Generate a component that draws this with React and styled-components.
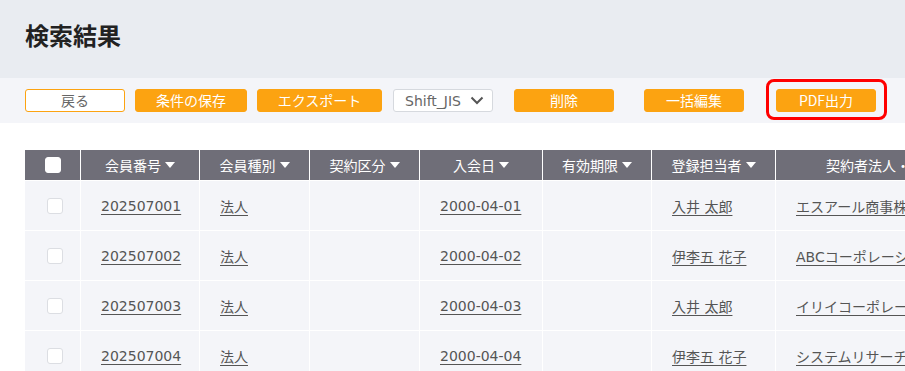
import React from "react";
import styled, { createGlobalStyle } from "styled-components";

const GlobalStyle = createGlobalStyle`
  html, body {
    margin: 0;
    padding: 0;
    background: #fff;
    overflow: hidden;
  }
  body {
    font-family: "DejaVu Sans", "Noto Sans CJK JP", sans-serif;
    color: #555;
  }
`;

const Page = styled.div`
  width: 905px;
  height: 371px;
  overflow: hidden;
`;

const Header = styled.header`
  height: 78px;
  box-sizing: border-box;
  background: #e9ecf1;
  padding: 20px 25px 0;
`;

const Title = styled.h1`
  margin: 0;
  font-family: "Noto Sans CJK JP", sans-serif;
  font-size: 24px;
  line-height: 30px;
  font-weight: 700;
  color: #222;
`;

const Toolbar = styled.div`
  height: 45px;
  background: #f4f5f9;
  padding: 0 25px;
  display: flex;
  align-items: center;
`;

const Button = styled.button`
  box-sizing: border-box;
  width: ${(p) => p.$w || 100}px;
  height: 23px;
  margin-left: ${(p) => p.$ml || 0}px;
  border-radius: 3px;
  border: 1px solid #fca311;
  background: ${(p) => (p.$outline ? "#fff" : "#fca311")};
  color: ${(p) => (p.$outline ? "#666" : "#fff")};
  font-family: "Noto Sans CJK JP", sans-serif;
  font-size: 14px;
  line-height: 21px;
  padding: 0;
  text-align: center;
`;

const Select = styled.div`
  box-sizing: border-box;
  width: 100px;
  height: 23px;
  margin-left: 11px;
  border: 1px solid #d6d9de;
  border-radius: 3px;
  background: #fff;
  display: flex;
  align-items: center;
  justify-content: space-between;
  padding: 0 8px 0 11px;
  font-size: 14px;
  color: #666;
`;

const Highlight = styled.div`
  position: relative;
  margin-left: 32px;
  display: flex;
`;

const RedFrame = styled.span`
  position: absolute;
  left: -10px;
  right: -11px;
  top: -10px;
  bottom: -8px;
  border: 3px solid #f00;
  border-radius: 8px;
  pointer-events: none;
`;

const TableWrap = styled.div`
  margin: 27px 0 0 25px;
`;

const cols = "55px 118px 109px 109px 122px 108px 123px 240px";

const Row = styled.div`
  display: grid;
  grid-template-columns: ${cols};
  column-gap: 1px;
  margin-bottom: 1px;
  height: ${(p) => (p.$head ? 30 : 49)}px;
`;

const HeadCell = styled.div`
  background: #6f6e78;
  color: #fff;
  font-family: "Noto Sans CJK JP", sans-serif;
  font-size: 14px;
  display: flex;
  align-items: center;
  justify-content: center;
  gap: 4px;
  white-space: nowrap;
  overflow: hidden;
`;

const Cell = styled.div`
  background: #f4f5f9;
  display: flex;
  align-items: center;
  justify-content: ${(p) => (p.$center ? "center" : "flex-start")};
  padding-left: ${(p) => (p.$center ? 4 : 20)}px;
  font-size: 14px;
  white-space: nowrap;
  overflow: hidden;
`;

const LinkText = styled.a`
  color: #555;
  text-decoration: underline;
  text-underline-offset: 3px;
  font-family: "DejaVu Sans", "Noto Sans CJK JP", sans-serif;
`;

const Check = styled.span`
  box-sizing: border-box;
  width: 16px;
  height: 16px;
  border-radius: 3px;
  background: #fff;
  border: 1px solid ${(p) => (p.$head ? "#fff" : "#dcdee3")};
`;

const Caret = styled.span`
  width: 0;
  height: 0;
  border-left: 5px solid transparent;
  border-right: 5px solid transparent;
  border-top: 6px solid #fff;
`;

const heads = ["会員番号", "会員種別", "契約区分", "入会日", "有効期限", "登録担当者", "契約者法人・個人名"];

const rows = [
  ["202507001", "2000-04-01", "入井 太郎", "エスアール商事株式会社"],
  ["202507002", "2000-04-02", "伊李五 花子", "ABCコーポレーション"],
  ["202507003", "2000-04-03", "入井 太郎", "イリイコーポレーション"],
  ["202507004", "2000-04-04", "伊李五 花子", "システムリサーチ株式会社"],
];

const Chevron = () => (
  <svg width="14" height="9" viewBox="0 0 14 9">
    <path d="M1.5 1.5 L7 7 L12.5 1.5" fill="none" stroke="#555" strokeWidth="2" />
  </svg>
);

export default function App() {
  return (
    <Page>
      <GlobalStyle />
      <Header>
        <Title>検索結果</Title>
      </Header>
      <Toolbar>
        <Button $outline $w={100}>戻る</Button>
        <Button $w={112} $ml={10}>条件の保存</Button>
        <Button $w={125} $ml={10}>エクスポート</Button>
        <Select>
          <span>Shift_JIS</span>
          <Chevron />
        </Select>
        <Button $ml={21}>削除</Button>
        <Button $ml={30}>一括編集</Button>
        <Highlight>
          <Button>PDF出力</Button>
          <RedFrame />
        </Highlight>
      </Toolbar>
      <TableWrap>
        <Row $head>
          <HeadCell>
            <Check $head />
          </HeadCell>
          {heads.map((h) => (
            <HeadCell key={h}>
              {h}
              <Caret />
            </HeadCell>
          ))}
        </Row>
        {rows.map(([id, date, staff, company]) => (
          <Row key={id}>
            <Cell $center>
              <Check />
            </Cell>
            <Cell>
              <LinkText>{id}</LinkText>
            </Cell>
            <Cell>
              <LinkText>法人</LinkText>
            </Cell>
            <Cell />
            <Cell>
              <LinkText>{date}</LinkText>
            </Cell>
            <Cell />
            <Cell>
              <LinkText>{staff}</LinkText>
            </Cell>
            <Cell>
              <LinkText>{company}</LinkText>
            </Cell>
          </Row>
        ))}
      </TableWrap>
    </Page>
  );
}
